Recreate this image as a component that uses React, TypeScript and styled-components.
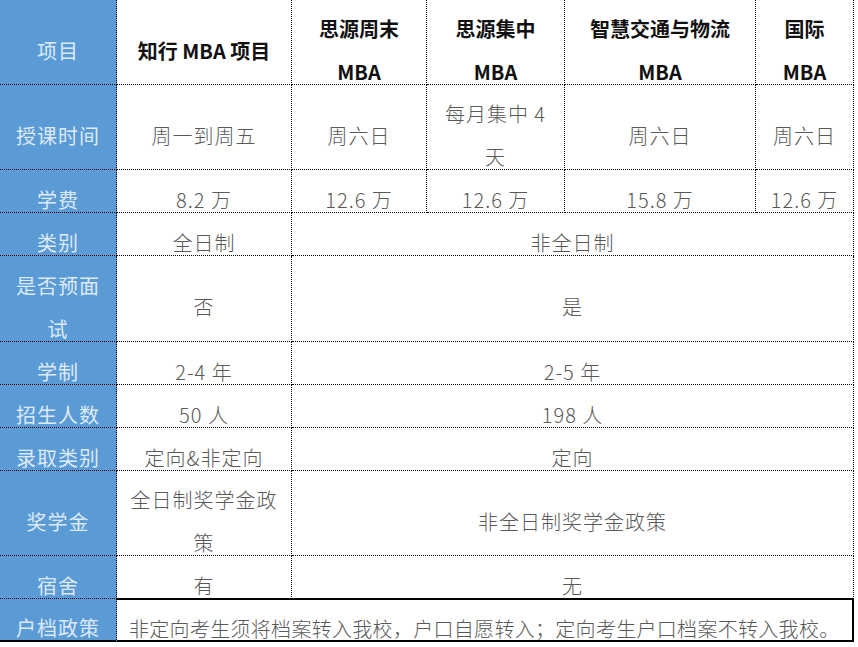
import { Fragment } from "react";
import styled, { createGlobalStyle, css } from "styled-components";

const GlobalStyle = createGlobalStyle`
  html, body {
    margin: 0;
    padding: 0;
    background: #ffffff;
  }
`;

type Cell = { text: string[]; span?: number; head?: boolean; left?: boolean };
type Row = { label: string[]; height: number; cells: Cell[]; solid?: boolean };

const rows: Row[] = [
  {
    label: ["项目"],
    height: 85,
    cells: [
      { text: ["知行 MBA 项目"], head: true },
      { text: ["思源周末", "MBA"], head: true },
      { text: ["思源集中", "MBA"], head: true },
      { text: ["智慧交通与物流", "MBA"], head: true },
      { text: ["国际", "MBA"], head: true },
    ],
  },
  {
    label: ["授课时间"],
    height: 85,
    cells: [
      { text: ["周一到周五"] },
      { text: ["周六日"] },
      { text: ["每月集中 4", "天"] },
      { text: ["周六日"] },
      { text: ["周六日"] },
    ],
  },
  {
    label: ["学费"],
    height: 43,
    cells: [
      { text: ["8.2 万"] },
      { text: ["12.6 万"] },
      { text: ["12.6 万"] },
      { text: ["15.8 万"] },
      { text: ["12.6 万"] },
    ],
  },
  { label: ["类别"], height: 43, cells: [{ text: ["全日制"] }, { text: ["非全日制"], span: 4 }] },
  { label: ["是否预面", "试"], height: 86, cells: [{ text: ["否"] }, { text: ["是"], span: 4 }] },
  { label: ["学制"], height: 43, cells: [{ text: ["2-4 年"] }, { text: ["2-5 年"], span: 4 }] },
  { label: ["招生人数"], height: 43, cells: [{ text: ["50 人"] }, { text: ["198 人"], span: 4 }] },
  { label: ["录取类别"], height: 43, cells: [{ text: ["定向&非定向"] }, { text: ["定向"], span: 4 }] },
  {
    label: ["奖学金"],
    height: 85,
    cells: [{ text: ["全日制奖学金政", "策"] }, { text: ["非全日制奖学金政策"], span: 4 }],
  },
  { label: ["宿舍"], height: 43, cells: [{ text: ["有"] }, { text: ["无"], span: 4 }] },
  {
    label: ["户档政策"],
    height: 43,
    solid: true,
    cells: [
      {
        text: ["非定向考生须将档案转入我校，户口自愿转入；定向考生户口档案不转入我校。"],
        span: 5,
        left: true,
      },
    ],
  },
];

export default function App(): JSX.Element {
  return (
    <>
      <GlobalStyle />
      <Table $rows={rows.map(r => `${r.height}px`).join(" ")}>
        {rows.map((row, ri) => (
          <Fragment key={ri}>
            <Label $solid={row.solid}>
              {row.label.map((t, i) => <Line key={i}>{t}</Line>)}
            </Label>
            {row.cells.map((cell, ci) => (
              <Value
                key={ci}
                $span={cell.span ?? 1}
                $head={cell.head}
                $left={cell.left}
                $solid={row.solid}
              >
                {cell.text.map((t, i) => <Line key={i}>{t}</Line>)}
              </Value>
            ))}
          </Fragment>
        ))}
      </Table>
    </>
  );
}

const Table = styled.div<{ $rows: string }>`
  display: grid;
  width: 854px;
  grid-template-columns: 117px 175px 135px 138px 191px 98px;
  grid-template-rows: ${({ $rows }) => $rows};
  font-family: "Noto Sans CJK SC", "Liberation Serif", serif;
  font-size: 20px;
`;

const cellBase = css`
  box-sizing: border-box;
  display: flex;
  flex-direction: column;
  justify-content: center;
  align-items: center;
  padding-top: 16px;
  line-height: 43px;
  text-align: center;
  border-bottom: 1px dotted #000;
  border-right: 1px dotted #000;
  overflow: visible;
`;

const Label = styled.div<{ $solid?: boolean }>`
  ${cellBase};
  background: #5b9bd5;
  color: #dde9f6;
  letter-spacing: 1px;
  ${({ $solid }) => $solid && css`
    border-bottom: 2px solid #000;
  `}
`;

const Value = styled.div<{ $span: number; $head?: boolean; $left?: boolean; $solid?: boolean }>`
  ${cellBase};
  grid-column: span ${({ $span }) => $span};
  color: ${({ $head }) => ($head ? "#111" : "#595959")};
  font-weight: ${({ $head }) => ($head ? 700 : 300)};
  letter-spacing: ${({ $head }) => ($head ? "0" : "1px")};
  ${({ $left }) => $left && css`
    align-items: flex-start;
    padding-left: 12px;
    letter-spacing: 0.3px;
    white-space: nowrap;
  `}
  ${({ $solid }) => $solid && css`
    border-top: 2px solid #000;
    border-bottom: 2px solid #000;
    border-right: 2px solid #000;
    margin-top: -1px;
  `}
`;

const Line = styled.span`
  display: block;
  height: 43px;
  flex-shrink: 0;
`;
